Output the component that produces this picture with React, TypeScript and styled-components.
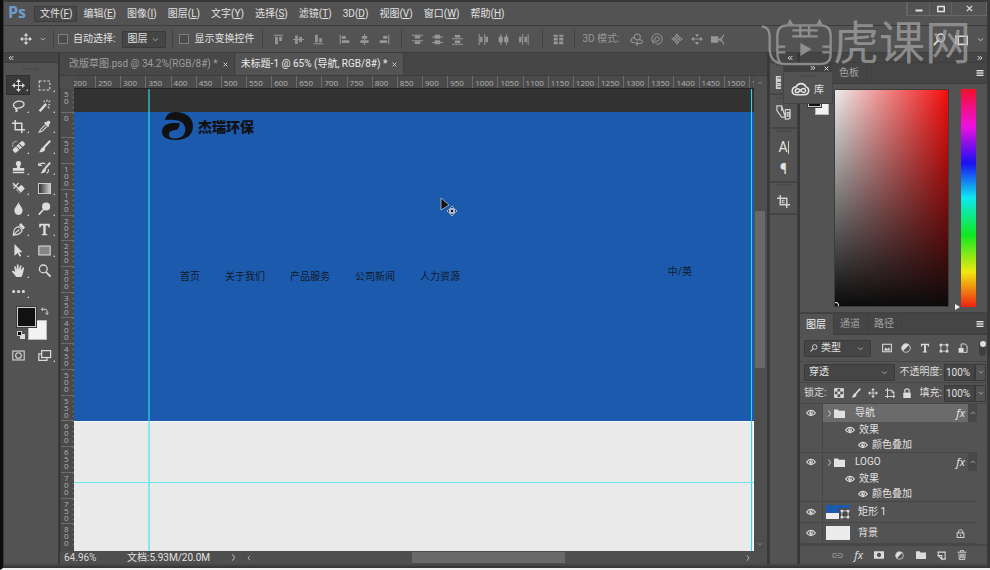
import React from "react";
import styled, { createGlobalStyle, css } from "styled-components";

const c = {
  panel: "#535353",
  dark: "#454545",
  line: "#3d3d3d",
  field: "#454545",
  text: "#e2e2e2",
  dim: "#a2a2a2",
  icon: "#dcdcdc",
  blue: "#1c5aad",
};

const Global = createGlobalStyle`
  * { box-sizing: border-box; }
  body { margin: 0; background: #0c0c0c; }
  body, button, input, select {
    font-family: Roboto, "Noto Sans CJK SC", sans-serif;
    font-size: 10px;
    line-height: 14px;
    color: ${c.text};
  }
  button { background: none; border: 0; padding: 0; display: flex; align-items: center; justify-content: center; }
  ul { list-style: none; margin: 0; padding: 0; }
`;

/* ---------- icons ---------- */

const f = { fill: "currentColor", stroke: "none" };
const icons: Record<string, React.ReactNode> = {
  move: (
    <>
      <path d="M8 2v12M2 8h12" />
      <path {...f} d="M8 0l3 3.6H5zM8 16l3-3.6H5zM0 8l3.6-3v6zM16 8l-3.6-3v6z" />
    </>
  ),
  marquee: <rect x="1.500" y="2.500" width="13" height="11" strokeDasharray="3 2" />,
  lasso: <path d="M5 11C1 10 .6 6 4 4s9-1.700 10.500 1-2 6.500-7.500 6.200c-3 0-3.500 2.300-1.300 2 1.500 0 1 2.300-1.700 2.300" strokeWidth="1.600" />,
  wand: (
    <>
      <path d="M2 15L10 6" strokeWidth="3" />
      <path d="M11 .5v3M7 2l1.500 1.500M15 2l-2 2M12.500 7l2.500 0M12 9.500l2 2" />
    </>
  ),
  crop: <path d="M4 0v12h12M0 4h12v12" strokeWidth="1.800" />,
  cropDetail: (
    <>
      <path d="M4 0v12h12M0 4h12v12" strokeWidth="1.800" />
      <path d="M9.500 6.500h-3v3h3" />
    </>
  ),
  dropper: (
    <>
      <path {...f} d="M10 3l1.500-1.500c2-2 5 1 3 3L13 6l1 1-1.500 1.500-5-5L9 2z" />
      <path d="M9.500 5.500L3 12l-1.500 3L5 14l6.500-6.500" />
    </>
  ),
  heal: (
    <>
      <rect {...f} x="0" y="5.500" width="17" height="6" rx="2" transform="rotate(-42 8.500 8.500)" />
      <path d="M1 8C0 4 3 1 6 2" strokeDasharray="1.500 1" />
      <path stroke="#535353" d="M5.500 8l4 4M9 5l4 4M8.500 8.500h.5" />
    </>
  ),
  brush: (
    <>
      <path d="M15 1L7 9.500" strokeWidth="2.600" />
      <path {...f} d="M6.500 8.500l2.500 2.300C8.500 15 4 15.500 1 15c2.500-1.500 2-5.500 5.500-6.500z" />
    </>
  ),
  stamp: <path {...f} d="M8 0c3 0 4 3 2.700 5-1 1.500-1 2 -.7 3.500h5V12H1V8.500h5c.3-1.500.3-2-.7-3.500C4 3 5 0 8 0zM1 13.300h14V15H1z" />,
  history: (
    <>
      <path d="M15 2L8.500 9.500" strokeWidth="2.400" />
      <path {...f} d="M8 8.500l2 2C9.500 14.500 6 15.500 3 15c2.500-1.500 2-5 5-6.500z" />
      <path d="M1 2v3.500h4M1.500 5C4 2 7 2 9 4M12.500 10c1 2 0 4-2 5" />
    </>
  ),
  eraser: (
    <>
      <rect {...f} x="6" y="6" width="9" height="6.500" rx="1" transform="rotate(-45 10 9)" />
      <path d="M1 1l7 7M8 1L2 8M1 4h4" strokeWidth="1.500" />
      <path stroke="#535353" d="M6.500 9.500l4 4" />
    </>
  ),
  drop: <path {...f} d="M8 0c1 4 5 6.500 5 10.500C13 13.500 11 16 8 16s-5-2.500-5-5.500C3 6.500 7 4 8 0z" />,
  dodge: (
    <>
      <circle {...f} cx="10" cy="5.500" r="5" />
      <path d="M7 9l-6 6.500" strokeWidth="2" />
    </>
  ),
  pen: (
    <>
      <path d="M1.500 15C2 9 3 5 8.500 4.500l4 4C12 13 8 14.500 1.500 15zL7 9.500" strokeWidth="1.400" />
      <path {...f} d="M8.500 2.500L11 0l5 5.500-2.500 2.500zM7 8h2v2H7z" />
    </>
  ),
  type: <path {...f} d="M1.500 1h13v4.500H13C12.500 3.300 12 3 9.500 3v9.500c0 1 .5 1.200 2 1.400V15h-7v-1.100c1.500-.2 2-.4 2-1.400V3C4 3 3.500 3.300 3 5.500H1.500z" />,
  arrow: <path {...f} d="M3 0l10 10H9l2.300 4.600-2 1L7 11l-4 3.500z" />,
  rectangle: <rect x="1" y="2.500" width="14" height="11" fill="#858585" />,
  hand: <path {...f} d="M5 16C3.500 13 1.500 11.500 0 9.500 0 8 2 8 3.800 10L2.800 3.500C2.700 2 4.200 2 4.600 3.300L5.800 7 6 1.500C6 0 7.800 0 8 1.500L8.300 7l1.500-4.800c.5-1.300 2-.9 1.800.5L11 7.800l2.200-3.200c.8-1 2.100-.2 1.600 1C14 8.500 13.500 13 11.500 16z" />,
  zoom: (
    <>
      <circle cx="6.500" cy="6" r="4.800" strokeWidth="1.600" />
      <path d="M10 10l5.500 5.500" strokeWidth="2.300" />
    </>
  ),
  dots: (
    <>
      <circle {...f} cx="2" cy="8" r="1.900" />
      <circle {...f} cx="8" cy="8" r="1.900" />
      <circle {...f} cx="14" cy="8" r="1.900" />
    </>
  ),
  mask: (
    <>
      <rect x="1" y="2.500" width="14" height="11" />
      <circle cx="8" cy="8" r="3.500" />
    </>
  ),
  screen: (
    <>
      <path d="M4.500 6H1v8h10v-3" strokeWidth="1.500" />
      <rect x="4.500" y="2" width="11" height="8.500" strokeWidth="1.500" />
    </>
  ),
  chevron: <path d="M2.500 5.500L8 11l5.500-5.500" strokeWidth="1.900" />,
  up: <path d="M2.500 10.500L8 5l5.500 5.500" strokeWidth="1.900" />,
  right: <path d="M5.500 1l5 7-5 7" strokeWidth="1.900" />,
  left: <path d="M10.500 2.500L5 8l5.500 5.500" strokeWidth="1.900" />,
  dleft: <path d="M8 3L3 8l5 5M14 3L9 8l5 5" strokeWidth="2.600" />,
  dright: <path d="M2 3l5 5-5 5M8 3l5 5-5 5" strokeWidth="2.600" />,
  close: <path d="M2 2l12 12M14 2L2 14" strokeWidth="3" />,
  min: <path d="M1 11h14" strokeWidth="4" />,
  max: <rect x="1.500" y="3" width="13" height="10" strokeWidth="3" />,
  menu: <path d="M1 3h14M1 6.300h14M1 9.600h14M1 13h14" strokeWidth="2" />,
  alTop: <path {...f} d="M1 1h14v1.500H1zM3 4h4v11H3zM9 4h4v6H9z" />,
  alMid: <path {...f} d="M0 7.300h16v1.500H0zM3 2h4v12H3zM9 4.500h4v7H9z" />,
  alBot: <path {...f} d="M1 13.500h14V15H1zM3 1h4v11H3zM9 6h4v6H9z" />,
  alLeft: <path {...f} d="M1 1h1.500v14H1zM4 3h6v4H4zM4 9h11v4H4z" />,
  alCen: <path {...f} d="M7.300 0h1.500v16H7.300zM4 3h8v4H4zM2 9h12v4H2z" />,
  alRight: <path {...f} d="M13.500 1H15v14h-1.500zM6 3h6v4H6zM1 9h11v4H1z" />,
  diTop: <path {...f} d="M0 1h16v1.500H0zM4 3h8v3.500H4zM0 9h16v1.500H0zM4 11h8v3.500H4z" />,
  diMid: <path {...f} d="M0 3.500h16V5H0zM4 1h8v6H4zM0 11.500h16V13H0zM4 9h8v6H4z" />,
  diBot: <path {...f} d="M0 6h16v1.500H0zM4 1.500h8V5H4zM0 14h16v1.500H0zM4 9.500h8V13H4z" />,
  diLeft: <path {...f} d="M1 0h1.500v16H1zM3 4h3.500v8H3zM9 0h1.500v16H9zM11 4h3.500v8H11z" />,
  diCen: <path {...f} d="M3.500 0H5v16H3.500zM1 4h6v8H1zM11.500 0H13v16h-1.500zM9 4h6v8H9z" />,
  diRight: <path {...f} d="M6 0h1.500v16H6zM1.500 4H5v8H1.500zM14 0h1.500v16H14zM9.500 4H13v8H9.500z" />,
  auto: <path {...f} d="M1 1h6v3H1zM9 1h6v3H9zM1 5.500h6v4H1zM9 5.500h6v4H9zM1 11h6v4H1zM9 11h6v4H9z" />,
  orbit: (
    <>
      <circle cx="9" cy="5" r="3.700" />
      <path d="M6 5.500C1 5.500-.5 10 3.500 12l3-.5M11 8.500c4-1 6 3 2 4.500H7.500l2-2.500M7.500 13l2 2.500" />
    </>
  ),
  roll: (
    <>
      <circle cx="8" cy="8" r="3" />
      <path d="M3 13A7 7 0 1 1 7 15M3 13V9M3 13h4" />
    </>
  ),
  pan3: (
    <>
      <path d="M8 1l2.500 3.500h-5zM8 15l2.500-3.500h-5zM1 8l3.500-2.500v5zM15 8l-3.500-2.500v5z" />
      <circle cx="8" cy="8" r="1.800" />
    </>
  ),
  slide3: (
    <>
      <path {...f} d="M8 5.500l2.500-4h-5zM8 16l3-4H5zM0 8l4-3v6zM16 8l-4-3v6z" />
      <path d="M4 8h8" />
    </>
  ),
  cam: (
    <>
      <path {...f} d="M0 4h9v8H0zM9 8l3-3v6z" />
      <path d="M16 2l-3.500 6 3.500 6" />
    </>
  ),
  search: (
    <>
      <circle cx="9.500" cy="6" r="4.700" strokeWidth="1.700" />
      <path d="M6 9.500L1 15" strokeWidth="2.200" />
    </>
  ),
  workspace: <path d="M1 14V4h14v10H4V4" strokeWidth="2" />,
  eye: (
    <>
      <path d="M1 8c3.500-5.500 10.500-5.500 14 0-3.500 5.500-10.500 5.500-14 0z" strokeWidth="1.800" />
      <circle {...f} cx="8" cy="8" r="3" />
      <circle fill="#535353" stroke="none" cx="8.500" cy="7.500" r="1" />
    </>
  ),
  folder: <path {...f} d="M0 2h6l1 2h9v10.500H0z" />,
  image: (
    <>
      <rect x="1" y="2" width="14" height="12" strokeWidth="1.700" />
      <path {...f} d="M3 12l3-5 2.500 3L11 7l2.500 5z" />
    </>
  ),
  adjust: (
    <>
      <circle cx="8" cy="8" r="6.800" />
      <path {...f} d="M12.800 3.200a6.800 6.800 0 0 0-9.600 9.600z" />
    </>
  ),
  shape: (
    <>
      <rect x="3" y="3" width="10" height="10" />
      <path {...f} d="M1 1h4v4H1zM11 1h4v4h-4zM1 11h4v4H1zM11 11h4v4h-4z" />
    </>
  ),
  smart: (
    <>
      <path d="M5 8V1.500h6l3.500 3V15H9" strokeWidth="1.500" />
      <path {...f} d="M1 8h8v7.500H1z" />
    </>
  ),
  checker: (
    <>
      <rect x="1" y="1" width="14" height="14" />
      <path {...f} d="M1 1h4.500v4.500H1zM10 1h5v4.500h-5zM5.500 5.500H10V10H5.500zM1 10h4.500v5H1zM10 10h5v5h-5z" />
    </>
  ),
  artboard: <path d="M4 0v16M0 3.500h11l3 3V16M0 13.500h16M11 3v4h4" strokeWidth="1.500" />,
  lockFill: (
    <>
      <rect {...f} x="2" y="7" width="12" height="9" rx="1" />
      <path d="M4.500 7V4c0-3.500 7-3.500 7 0v3" strokeWidth="1.900" />
    </>
  ),
  lock: (
    <>
      <rect x="2" y="7" width="12" height="8" strokeWidth="1.600" />
      <path d="M4.500 7V4c0-3.500 7-3.500 7 0v3M8 10v3" strokeWidth="1.600" />
    </>
  ),
  link: <path d="M7 5H4a3 3 0 0 0 0 6h3M9 5h3a3 3 0 0 1 0 6H9M5 8h6" strokeWidth="1.500" />,
  maskAdd: <path {...f} fillRule="evenodd" d="M0 2h16v12H0zM8 4.500a3.500 3.500 0 1 0 .01 0z" />,
  newLayer: <path d="M2 8V2h12.500v12.500H9M2 8h6.500v6.500zM8.500 8L2 8" strokeWidth="1.900" />,
  trash: <path d="M1 3.500h14M5.500 3V1h5v2M3 5.500l.6 9.500h8.800l.6-9.500M6 6v7M8 6v7M10 6v7" strokeWidth="1.500" />,
  swap: <path d="M4 1L1 4.500 4 8M1 4.500h7c3 0 4 1 4 4V14M9 11.500l3 3.500 3-3.500" strokeWidth="1.800" />,
  cc: (
    <>
      <path d="M4 13C-1.500 12.500-.5 5.500 4 5.500 5.500 1.500 11.500 1.500 13 5.500c4 1.500 3.500 7.500-1.500 7.500z" strokeWidth="1.500" />
      <path d="M11 10.800c-2 0-2.500-1.300-4-2.800S3 7.700 3 9.300s2 2.300 3.600.7S9 7 11 7s2.600 3.800 0 3.800z" strokeWidth="1.400" />
    </>
  ),
  libs: <path d="M1 1h5l4 12H6L1 6zM6 1v5M10 5h5v9l-2 1h-3zM12 8h2v4h-2z" />,
  histPanel: <path d="M8 2H3v3h5M8 7H3v3h5M8 12H3v3h5" strokeWidth="1.800" />,
};

const Svg = styled.svg<{ $s: number }>`
  width: ${(p) => p.$s}px;
  height: ${(p) => p.$s}px;
  flex: none;
  display: block;
  overflow: visible;
`;
const Icon = ({ n, s = 12 }: { n: string; s?: number }) => (
  <Svg $s={s} viewBox="0 0 16 16" fill="none" stroke="currentColor" strokeWidth="1.300" aria-hidden="true">
    {icons[n]}
  </Svg>
);

/* ---------- frame ---------- */

const Shell = styled.div`
  height: 100vh;
  display: flex;
  flex-direction: column;
  padding: 2px 3px 0 1px;
  background: #383838;
  border-left: 3px solid #0c0c0c;
  border-bottom: 2px solid #f2f2f2;
  position: relative;
  overflow: hidden;
`;
const MenuBar = styled.header`
  height: 24px;
  flex: none;
  display: flex;
  background: ${c.panel};
  border-bottom: 1px solid ${c.line};
`;
const Logo = styled.div`
  color: #6f9ccc;
  font: bold 16px/20px "Open Sans", sans-serif;
  width: 30px;
  padding-left: 4px;
`;
const Menu = styled.nav`
  display: flex;
  flex: 1;
  align-items: center;
`;
const MenuItem = styled.button<{ $on?: boolean }>`
  height: 16px;
  padding: 0 4px 0 5px;
  white-space: nowrap;
  border: 1px solid transparent;
  ${(p) => p.$on && css`background: #484848; border-color: #3c3c3c;`}
`;
const WindowButtons = styled.div`
  display: flex;
  height: 14px;
  border: 1px solid #676767;
  border-top: 0;
`;
const WindowButton = styled.button<{ $wide?: boolean }>`
  width: ${(p) => (p.$wide ? 35 : 22)}px;
  border-left: 1px solid #626262;
`;
const Options = styled.div`
  height: 27px;
  flex: none;
  display: flex;
  align-items: center;
  background: ${c.panel};
  border-bottom: 1px solid ${c.line};
  padding: 0 3px 0 9px;
  white-space: nowrap;
`;
const Sep = styled.i`
  width: 1px;
  height: 18px;
  background: #424242;
`;
const OptGroup = styled.div<{ $gap?: number; $pad?: number; $dim?: boolean }>`
  display: flex;
  align-items: center;
  gap: ${(p) => p.$gap ?? 8}px;
  padding: 0 ${(p) => p.$pad ?? 8}px;
  color: ${(p) => (p.$dim ? "#969696" : c.icon)};
`;
const ModeLabel = styled.span`
  padding: 0 2px;
`;
const Check = styled.label`
  display: flex;
  align-items: center;
  gap: 5px;
  color: ${c.text};
  input {
    appearance: none;
    width: 10px;
    height: 10px;
    margin: 0;
    border: 1px solid #7e7e7e;
    background: #4a4a4a;
  }
`;
const Spring = styled.div`
  flex: 1;
`;

const SelectWrap = styled.div<{ $w: number }>`
  display: grid;
  grid-template-columns: 1fr 14px;
  align-items: center;
  width: ${(p) => p.$w}px;
  height: 17px;
  color: #bdbdbd;
  > svg { grid-area: 1 / 2; pointer-events: none; }
`;
const Select = styled.select<{ $pad?: number }>`
  grid-area: 1 / 1 / 2 / 3;
  appearance: none;
  width: 100%;
  height: 100%;
  border: 1px solid #3a3a3a;
  border-radius: 1px;
  background: ${c.field};
  padding: 0 0 0 ${(p) => p.$pad ?? 4}px;
`;
const Dropdown = ({ label, value, w, pad }: { label: string; value: string; w: number; pad?: number }) => (
  <SelectWrap $w={w}>
    <Select aria-label={label} $pad={pad}>
      <option>{value}</option>
    </Select>
    <Icon n="chevron" s={7} />
  </SelectWrap>
);

const Main = styled.div`
  flex: 1;
  min-height: 0;
  display: flex;
  gap: 2px;
  border-bottom: 2px solid #464646;
  margin-bottom: 2px;
`;

/* ---------- toolbox ---------- */

const ToolBox = styled.aside`
  width: 54px;
  flex: none;
  background: ${c.panel};
  display: flex;
  flex-direction: column;
`;
const DockHead = styled.div<{ $end?: boolean }>`
  height: 10px;
  flex: none;
  display: flex;
  align-items: center;
  justify-content: ${(p) => (p.$end ? "flex-end" : "flex-start")};
  padding: 0 4px;
  background: ${c.dark};
  border-bottom: 1px solid ${c.line};
`;
const Grip = styled.i<{ $h: number }>`
  height: ${(p) => p.$h}px;
  flex: none;
  align-self: center;
  width: 16px;
  background: repeating-linear-gradient(90deg, #444 0 1px, transparent 1px 2px) center / 16px 2px no-repeat;
`;
const ToolGrid = styled.div`
  display: grid;
  grid-template-columns: 26px 26px;
  grid-template-rows: repeat(11, 1fr);
  height: 227px;
  padding-left: 1px;
`;
const Tool = styled.button<{ $on?: boolean; $plain?: boolean }>`
  position: relative;
  height: 20px;
  margin: 0 1px;
  color: ${c.icon};
  ${(p) => p.$on && css`background: #3a3a3a; border: 1px solid #303030;`}
  ${(p) =>
    !p.$plain &&
    css`
      &::after {
        content: "";
        position: absolute;
        right: 1px;
        bottom: 3px;
        border: 1px solid #c8c8c8;
        border-top-color: transparent;
        border-left-color: transparent;
      }
    `}
`;
const Colors = styled.div`
  display: grid;
  grid-template-columns: 11px 9px 10px;
  grid-template-rows: 13px 7px 13px;
  margin: 5px 0 0 13px;
  color: ${c.icon};
`;
const Fore = styled.button`
  grid-area: 1 / 1 / 3 / 3;
  margin-right: 1px;
  background: #111;
  border: 1px solid #ccc;
  outline: 1px solid #3a3a3a;
  z-index: 1;
`;
const Back = styled.button`
  grid-area: 2 / 2 / 4 / 4;
  background: #f2f2f2;
  border: 1px solid #bbb;
`;
const SwapBtn = styled.button`
  grid-area: 1 / 3;
  align-self: start;
  margin-left: 5px;
`;
const DefaultBtn = styled.button`
  grid-area: 3 / 1;
  align-self: center;
  justify-self: start;
  width: 5px;
  height: 5px;
  background: #000;
  border: 1px solid #ccc;
  box-shadow: 3px 3px 0 #ddd;
`;
const ModeRow = styled.div`
  display: grid;
  grid-template-columns: 26px 26px;
  padding: 5px 0 0 1px;
`;

/* ---------- document ---------- */

const Doc = styled.main`
  flex: 1;
  min-width: 0;
  display: flex;
  flex-direction: column;
  background: ${c.dark};
`;
const Tabs = styled.div`
  display: flex;
  height: 23px;
  flex: none;
  background: #464646;
  border-bottom: 1px solid ${c.line};
`;
const DocTab = styled.div<{ $on?: boolean }>`
  display: flex;
  align-items: center;
  gap: 5px;
  padding: 0 6px 0 ${(p) => (p.$on ? 6 : 9)}px;
  white-space: nowrap;
  border-right: 1px solid ${c.line};
  color: ${(p) => (p.$on ? "#ececec" : "#9e9e9e")};
  background: ${(p) => (p.$on ? c.panel : "#484848")};
  > button:first-child { color: inherit; }
  > button:last-child { color: #cfcfcf; }
`;
const Board = styled.div`
  flex: 1;
  min-height: 0;
  display: grid;
  grid-template-columns: 14px 1fr 13px;
  grid-template-rows: 13px 1fr 13px;
  background: #4e4e4e;
`;
const RulerX = styled.div`
  grid-area: 1 / 2;
  overflow: hidden;
  border-bottom: 1px solid #222;
  background: #4a4a4a;
`;
const TicksX = styled.div`
  display: grid;
  grid-template-columns: repeat(28, 1fr);
  height: 100%;
  margin: 0 -20px 0 -4px;
`;
const TickX = styled.span`
  border-left: 1px solid #6c6c6c;
  padding-left: 2px;
  font: 8px/14px "Open Sans", sans-serif;
  color: #b2b2b2;
  background: repeating-linear-gradient(90deg, #666 0 1px, transparent 1px 5px) 0 100% / 100% 2px no-repeat;
`;
const RulerY = styled.div`
  grid-area: 2 / 1;
  overflow: hidden;
  background: #4a4a4a;
  border-left: 1px solid #3f3f3f;
`;
const TicksY = styled.div`
  display: grid;
  grid-template-rows: repeat(18, 1fr);
  height: calc(100% + 1px);
  margin-top: -3px;
`;
const TickY = styled.span`
  border-top: 1px solid #6c6c6c;
  padding: 1px 5px 0 3px;
  font: 8px/7px "Open Sans", sans-serif;
  color: #b2b2b2;
  width: 13px;
  word-break: break-all;
  background: repeating-linear-gradient(#666 0 1px, transparent 1px 5px) 100% 0 / 2px 100% no-repeat;
  &:first-child { padding-top: 3px; }
`;
const Canvas = styled.div`
  grid-area: 2 / 2;
  position: relative;
  overflow: hidden;
  display: flex;
  flex-direction: column;
  background: #323232;
  padding-top: 23px;
  color: #101a2c;
`;
const Page = styled.div`
  flex: 1;
  background: #eaeaea;
  border-right: 1px solid #fff;
`;
const Hero = styled.section`
  background: ${c.blue};
  height: 310px;
  display: flex;
  flex-direction: column;
  border-bottom: 1px solid #fff;
`;
const Brand = styled.div`
  display: flex;
  align-items: center;
  gap: 5px;
  padding-left: 88px;
  height: 28px;
  font: 900 14px/20px "Noto Sans CJK SC", sans-serif;
  color: #111;
`;
const SiteNav = styled.nav`
  display: flex;
  justify-content: space-between;
  align-items: flex-start;
  margin-top: 125px;
  padding: 0 62px 0 106px;
  ul { display: flex; gap: 25px; padding-top: 5px; }
  a { color: inherit; text-decoration: none; white-space: nowrap; }
`;
const GuideV = styled.i<{ $right?: boolean }>`
  position: absolute;
  top: 0;
  bottom: 0;
  ${(p) => (p.$right ? "right: 2px;" : "left: 74px;")}
  width: ${(p) => (p.$right ? 1 : 2)}px;
  background: ${(p) => (p.$right ? "#22dbe6" : "rgba(50, 230, 235, 0.55)")};
`;
const GuideH = styled.i`
  position: absolute;
  left: 0;
  right: 0;
  top: 393px;
  height: 1px;
  background: #66e6e6;
`;
const Cursor = styled.svg`
  position: absolute;
  left: 366px;
  top: 108px;
  width: 18px;
  height: 20px;
`;
const ScrollY = styled.div`
  grid-area: 1 / 3 / 3 / 4;
  display: flex;
  flex-direction: column;
  align-items: center;
  padding: 4px 2px 4px 0;
  color: #969696;
`;
const ThumbY = styled.div`
  width: 10px;
  height: 157px;
  margin-top: 125px;
  background: #696969;
`;
const Status = styled.footer`
  grid-area: 3 / 1 / 4 / 4;
  display: flex;
  align-items: center;
  padding: 0 16px 0 4px;
  color: #d8d8d8;
  white-space: nowrap;
`;
const ZoomLevel = styled.span`
  width: 63px;
`;
const DocSize = styled.button`
  width: 110px;
  margin-right: 9px;
  justify-content: space-between;
`;
const TrackX = styled.div`
  flex: 1;
  height: 11px;
  display: flex;
  justify-content: center;
  padding-right: 20px;
`;
const ThumbX = styled.div`
  width: 153px;
  background: #696969;
`;

/* ---------- right docks ---------- */

const Strip = styled.aside`
  width: 29px;
  flex: none;
  display: flex;
  flex-direction: column;
  background: ${c.panel};
  border-left: 1px solid ${c.line};
  border-right: 1px solid ${c.line};
  position: relative;
`;
const StripGroup = styled.div<{ $h: number; $gap?: number }>`
  height: ${(p) => p.$h}px;
  display: flex;
  flex-direction: column;
  align-items: center;
  gap: ${(p) => p.$gap ?? 9}px;
  border-bottom: 2px solid #454545;
  color: #d0d0d0;
`;
const Character = styled.button<{ $caret?: boolean }>`
  font-size: 14px;
  line-height: 13px;
  ${(p) => p.$caret && "border-right: 1px solid #ccc;"}
`;
const Library = styled.div`
  position: absolute;
  left: 13px;
  top: 10px;
  width: 50px;
  z-index: 2;
  background: ${c.panel};
  border: 1px solid #444;
  display: flex;
  flex-direction: column;
`;
const LibraryHead = styled.div`
  height: 8px;
  display: flex;
  justify-content: flex-end;
  align-items: center;
  gap: 8px;
  padding-right: 3px;
  background: #404040;
`;
const LibraryBtn = styled.button`
  height: 24px;
  gap: 5px;
  padding-bottom: 3px;
`;
const Dock = styled.aside`
  width: 187px;
  flex: none;
  display: flex;
  flex-direction: column;
  background: ${c.panel};
`;
const PanelTabs = styled.div<{ $pad?: number }>`
  display: flex;
  flex: none;
  height: 21px;
  align-items: stretch;
  padding: 0 3px 0 ${(p) => p.$pad ?? 0}px;
  background: ${c.dark};
  border-bottom: 1px solid ${c.line};
  color: #b4b4b4;
`;
const PanelTab = styled.button<{ $on?: boolean }>`
  padding: 0 7px 0 6px;
  border-right: 1px solid #404040;
  color: ${(p) => (p.$on ? "#f2f2f2" : c.dim)};
  background: ${(p) => (p.$on ? c.panel : "transparent")};
  margin-bottom: ${(p) => (p.$on ? -1 : 0)}px;
`;
const ColorPanel = styled.div`
  display: flex;
  padding: 5px 11px 5px 8px;
  border-bottom: 2px solid #424242;
  height: 230px;
  flex: none;
`;
const MiniColors = styled.div`
  display: grid;
  grid-template-columns: 7px 7px 7px;
  grid-template-rows: 8px 5px 8px;
  margin-top: 5px;
  width: 26px;
`;
const Field = styled.div`
  flex: 1;
  border: 1px solid #3c3c3c;
  background: linear-gradient(to top, #0b0b0b, transparent), linear-gradient(to right, #ececec, #f40d0d);
  display: flex;
  align-items: flex-end;
  overflow: hidden;
`;
const Picker = styled.i`
  width: 6px;
  height: 6px;
  margin: 0 0 -2px -2px;
  border: 1px solid #fff;
  border-radius: 50%;
`;
const HueWrap = styled.div`
  display: flex;
  align-items: flex-end;
  margin-left: 6px;
`;
const HuePointer = styled.i`
  border: 3px solid transparent;
  border-left: 5px solid #eee;
  border-right: 0;
  margin: 0 1px -3px 0;
`;
const Hue = styled.div`
  width: 15px;
  height: 100%;
  background: linear-gradient(#f0102a, #f010e0 17%, #1a10f0 34%, #10e8f0 50%, #10e820 67%, #f0e810 84%, #f02010);
`;
const Row = styled.div<{ $h?: number }>`
  display: flex;
  align-items: center;
  justify-content: space-between;
  flex: none;
  height: ${(p) => p.$h ?? 21}px;
  padding: 0 1px 0 4px;
  border-bottom: 1px solid #474747;
  color: ${c.icon};
  white-space: nowrap;
`;
const Cluster = styled.div<{ $gap: number }>`
  display: flex;
  align-items: center;
  gap: ${(p) => p.$gap}px;
`;
const FilterSelect = styled.div`
  display: grid;
  align-items: center;
  width: 67px;
  > svg { grid-area: 1 / 1; margin-left: 6px; z-index: 1; }
  > div { grid-area: 1 / 1; }
`;
const Toggle = styled.button`
  width: 7px;
  height: 15px;
  border-radius: 4px;
  background: #3f3f3f;
  align-items: flex-start;
  &::before { content: ""; width: 6px; height: 6px; border-radius: 50%; background: #ddd; }
`;
const Percent = styled.label`
  display: flex;
  align-items: center;
  gap: 2px;
  input {
    width: 31px;
    height: 17px;
    padding: 0 1px;
    background: ${c.field};
    border: 1px solid #3a3a3a;
  }
`;
const Drop = styled.button`
  width: 11px;
  height: 17px;
  border: 1px solid #3a3a3a;
  color: #bdbdbd;
`;
const LayerList = styled.ul`
  flex: 1;
`;
const Layer = styled.li`
  display: grid;
  grid-template-columns: 23px 1fr;
  margin-right: 10px;
  border-bottom: 1px solid #474747;
`;
const EyeCell = styled.div<{ $h: number }>`
  display: flex;
  justify-content: center;
  padding-top: ${(p) => p.$h / 2 - 5}px;
  border-right: 1px solid #474747;
  color: ${c.icon};
`;
const LayerRow = styled.div<{ $on?: boolean; $h: number }>`
  display: flex;
  align-items: center;
  height: ${(p) => p.$h}px;
  padding: 0 0 0 3px;
  background: ${(p) => (p.$on ? "#6b6b6b" : "transparent")};
  color: ${c.text};
`;
const Name = styled.span<{ $l: number }>`
  flex: 1;
  padding-left: ${(p) => p.$l}px;
`;
const Fx = styled.span`
  font: italic 11px/14px "Noto Sans", sans-serif;
`;
const FxCell = styled.div`
  display: flex;
  align-items: center;
  align-self: stretch;
  gap: 3px;
  > button { width: 9px; height: 100%; background: #484848; color: #bbb; }
`;
const Effect = styled.div<{ $l: number }>`
  display: flex;
  align-items: center;
  gap: 4px;
  height: 15px;
  padding-left: ${(p) => p.$l}px;
`;
const Thumb = styled.div<{ $shape?: boolean }>`
  width: 24px;
  height: 14px;
  display: flex;
  justify-content: flex-end;
  align-items: flex-end;
  color: #ddd;
  background: ${(p) => (p.$shape ? `linear-gradient(${c.blue} 60%, #eee 60%)` : "#ececec")};
`;
const ShapeBadge = styled.i`
  display: flex;
  padding: 1px 0 0 1px;
  background: #484848;
`;
const LayerFoot = styled.div`
  height: 20px;
  flex: none;
  display: flex;
  align-items: center;
  justify-content: space-between;
  padding: 0 20px 0 32px;
  border-top: 2px solid #474747;
  color: ${c.icon};
  > svg:first-child { color: #8e8e8e; }
`;

/* ---------- overlay ---------- */

const Watermark = styled.div`
  position: absolute;
  right: 19px;
  top: 11px;
  height: 56px;
  display: flex;
  align-items: center;
  pointer-events: none;
  color: #a8a8a8;
  opacity: 0.7;
  font: 400 46px/56px "Noto Sans CJK SC", sans-serif;
  z-index: 5;
  svg { width: 72px; height: 50px; margin-top: 8px; }
`;

/* ---------- data ---------- */

const menus: [string, string][] = [
  ["文件", "F"], ["编辑", "E"], ["图像", "I"], ["图层", "L"], ["文字", "Y"], ["选择", "S"],
  ["滤镜", "T"], ["3D", "D"], ["视图", "V"], ["窗口", "W"], ["帮助", "H"],
];
const tools = [
  "move", "marquee", "lasso", "wand", "crop", "dropper", "heal", "brush", "stamp", "history", "eraser",
  "gradient", "drop", "dodge", "pen", "type", "arrow", "rectangle", "hand", "zoom", "dots",
];
const Gradient = styled.i`
  width: 13px;
  height: 11px;
  border: 1px solid #ccc;
  background: linear-gradient(90deg, #333, #ccc);
`;
const ticksX = Array.from({ length: 28 }, (_, i) => 200 + i * 50);
const ticksY = Array.from({ length: 18 }, (_, i) => Math.abs(i * 50 - 50));

const GroupLayer = ({ name, on }: { name: string; on?: boolean }) => (
  <Layer>
    <EyeCell $h={18}><Icon n="eye" s={10} /></EyeCell>
    <div>
      <LayerRow $on={on} $h={18}>
        <Icon n="right" s={7} />
        <Cluster $gap={0}><Name $l={1} /><Icon n="folder" s={11} /></Cluster>
        <Name $l={10}>{name}</Name>
        <FxCell>
          <Fx>fx</Fx>
          <button aria-label="折叠效果"><Icon n="up" s={6} /></button>
        </FxCell>
      </LayerRow>
      <Effect $l={22}><Icon n="eye" s={10} />效果</Effect>
      <Effect $l={35}><Icon n="eye" s={10} />颜色叠加</Effect>
    </div>
  </Layer>
);

export default function App() {
  return (
    <Shell>
      <Global />
      <MenuBar>
        <Logo>Ps</Logo>
        <Menu>
          {menus.map(([t, k], i) => (
            <MenuItem key={t} $on={i === 0}>{t}(<u>{k}</u>)</MenuItem>
          ))}
        </Menu>
        <WindowButtons>
          <WindowButton aria-label="最小化"><Icon n="min" s={8} /></WindowButton>
          <WindowButton aria-label="最大化"><Icon n="max" s={8} /></WindowButton>
          <WindowButton $wide aria-label="关闭"><Icon n="close" s={7} /></WindowButton>
        </WindowButtons>
      </MenuBar>

      <Options>
        <OptGroup $gap={8} $pad={7}>
          <Icon n="move" s={12} />
          <Icon n="chevron" s={6} />
        </OptGroup>
        <Sep />
        <OptGroup $gap={7} $pad={4}>
          <Check><input type="checkbox" />自动选择:</Check>
          <Dropdown label="自动选择" value="图层" w={44} />
        </OptGroup>
        <OptGroup $pad={1} />
        <Sep />
        <OptGroup $pad={6}>
          <Check><input type="checkbox" />显示变换控件</Check>
        </OptGroup>
        <OptGroup $pad={1} />
        <Sep />
        <OptGroup $gap={9} $pad={10} $dim>
          <Icon n="alTop" s={11} /><Icon n="alMid" s={11} /><Icon n="alBot" s={11} />
        </OptGroup>
        <OptGroup $gap={9} $pad={5} $dim>
          <Icon n="alLeft" s={11} /><Icon n="alCen" s={11} /><Icon n="alRight" s={11} />
        </OptGroup>
        <OptGroup $pad={3} />
        <Sep />
        <OptGroup $gap={9} $pad={10} $dim>
          <Icon n="diTop" s={11} /><Icon n="diMid" s={11} /><Icon n="diBot" s={11} />
        </OptGroup>
        <OptGroup $gap={9} $pad={5} $dim>
          <Icon n="diLeft" s={11} /><Icon n="diCen" s={11} /><Icon n="diRight" s={11} />
        </OptGroup>
        <OptGroup $pad={4} />
        <Sep />
        <OptGroup $pad={10} $dim><Icon n="auto" s={11} /></OptGroup>
        <Sep />
        <OptGroup $gap={8} $pad={5} $dim>
          <ModeLabel>3D 模式:</ModeLabel>
          <Icon n="orbit" s={13} /><Icon n="roll" s={12} /><Icon n="pan3" s={12} /><Icon n="slide3" s={12} /><Icon n="cam" s={13} />
        </OptGroup>
        <Spring />
        <OptGroup $gap={9} $pad={0}>
          <Icon n="search" s={13} /><Icon n="workspace" s={13} /><Icon n="chevron" s={7} />
        </OptGroup>
      </Options>

      <Main>
        <ToolBox>
          <DockHead><Icon n="dleft" s={6} /></DockHead>
          <Grip $h={12} />
          <ToolGrid>
            {tools.map((t, i) => (
              <Tool key={t} aria-label={t} $on={i === 0} $plain={t === "zoom"}>
                {t === "gradient" ? <Gradient /> : <Icon n={t} s={13} />}
              </Tool>
            ))}
          </ToolGrid>
          <Colors>
            <Fore aria-label="前景色" />
            <Back aria-label="背景色" />
            <SwapBtn aria-label="切换颜色"><Icon n="swap" s={8} /></SwapBtn>
            <DefaultBtn aria-label="默认颜色" />
          </Colors>
          <ModeRow>
            <Tool $plain aria-label="快速蒙版"><Icon n="mask" s={13} /></Tool>
            <Tool aria-label="屏幕模式"><Icon n="screen" s={13} /></Tool>
          </ModeRow>
        </ToolBox>

        <Doc>
          <Tabs>
            <DocTab>
              <button>改版草图.psd @ 34.2%(RGB/8#) *</button>
              <button aria-label="关闭"><Icon n="close" s={5} /></button>
            </DocTab>
            <DocTab $on>
              <button>未标题-1 @ 65% (导航, RGB/8#) *</button>
              <button aria-label="关闭"><Icon n="close" s={5} /></button>
            </DocTab>
          </Tabs>
          <Board>
            <RulerX>
              <TicksX>{ticksX.map((v) => <TickX key={v}>{v}</TickX>)}</TicksX>
            </RulerX>
            <RulerY>
              <TicksY>{ticksY.map((v, i) => <TickY key={i}>{v}</TickY>)}</TicksY>
            </RulerY>
            <Canvas>
              <Hero>
                <Brand>
                  <svg width="31" height="28" viewBox="0 0 31 28" aria-hidden="true">
                    <path fill="#111" d="M3 8C4 3 7 0 13 0c11 0 18 6 18 14 0 9-7 14-17 14C5 28 0 25 0 20c0-6 5-9 11-9h7l-1.500 5C15 18 14 18.500 12 18.500c-3 0-5 1.500-5 4 1.500 3.500 8 4.500 12 2.500 5-2.500 5.500-9 2.500-13C18 7.500 11 7.500 3 8z" />
                    <path fill={c.blue} d="M3 9.500C11 8.500 17 8.500 20.500 12c-4-2-8-2-12-1.200L2 13zM7 24c-.5-4 3-6 8-6 3 0 5.500 1.500 6 4-2 3.500-5 4.500-9 4.500-2.500-.3-4-1-5-2.500z" />
                  </svg>
                  杰瑞环保
                </Brand>
                <SiteNav>
                  <ul>
                    {["首页", "关于我们", "产品服务", "公司新闻", "人力资源"].map((t) => (
                      <li key={t}><a href="#">{t}</a></li>
                    ))}
                  </ul>
                  <a href="#">中/英</a>
                </SiteNav>
              </Hero>
              <Page />
              <GuideV />
              <GuideV $right />
              <GuideH />
              <Cursor viewBox="0 0 18 20" aria-hidden="true">
                <path d="M1 1v12l8-5z" fill="#111" stroke="#c8d4e6" strokeWidth=".7" />
                <path d="M12 9l2 2.500h-4zM12 19l2-2.500h-4zM7 14l2.500-2v4zM17 14l-2.500-2v4zM10.500 12.500h3v3h-3z" fill="#111" stroke="#d8e0ee" strokeWidth=".8" />
              </Cursor>
            </Canvas>
            <ScrollY>
              <Icon n="up" s={6} />
              <ThumbY />
              <Spring />
              <Icon n="chevron" s={6} />
            </ScrollY>
            <Status>
              <ZoomLevel>64.96%</ZoomLevel>
              <DocSize>文档:5.93M/20.0M<Icon n="right" s={7} /></DocSize>
              <Icon n="left" s={6} />
              <TrackX><ThumbX /></TrackX>
              <Icon n="right" s={6} />
            </Status>
          </Board>
        </Doc>

        <Strip>
          <DockHead $end><Icon n="dleft" s={6} /></DockHead>
          <StripGroup $h={32}><Grip $h={3} /><Cluster $gap={0}><Icon n="histPanel" s={14} /><OptGroup $pad={3} /></Cluster></StripGroup>
          <StripGroup $h={34} $gap={5}><Grip $h={5} /><Icon n="libs" s={15} /></StripGroup>
          <StripGroup $h={54}>
            <Grip $h={3} />
            <Character $caret aria-label="字符">A</Character>
            <Character aria-label="段落">¶</Character>
          </StripGroup>
          <StripGroup $h={32}><Grip $h={3} /><Icon n="cropDetail" s={13} /></StripGroup>
          <Library>
            <LibraryHead><Icon n="dright" s={6} /><Icon n="close" s={5} /></LibraryHead>
            <Grip $h={7} />
            <LibraryBtn><Icon n="cc" s={17} />库</LibraryBtn>
          </Library>
        </Strip>

        <Dock>
          <DockHead $end><Icon n="dright" s={6} /></DockHead>
          <PanelTabs $pad={33}>
            <PanelTab>色板</PanelTab>
            <Spring />
            <button aria-label="面板菜单"><Icon n="menu" s={8} /></button>
          </PanelTabs>
          <ColorPanel>
            <MiniColors><Fore aria-label="前景色" /><Back aria-label="背景色" /></MiniColors>
            <Field><Picker /></Field>
            <HueWrap><HuePointer /><Hue /></HueWrap>
          </ColorPanel>
          <PanelTabs>
            <PanelTab $on>图层</PanelTab>
            <PanelTab>通道</PanelTab>
            <PanelTab>路径</PanelTab>
            <Spring />
            <button aria-label="面板菜单"><Icon n="menu" s={8} /></button>
          </PanelTabs>
          <Row $h={27}>
            <FilterSelect>
              <Icon n="search" s={8} />
              <Dropdown label="筛选" value="类型" w={67} pad={16} />
            </FilterSelect>
            <Cluster $gap={9}>
              {["image", "adjust", "type", "shape", "smart"].map((n) => <Icon key={n} n={n} s={10} />)}
            </Cluster>
            <Toggle aria-label="筛选开关" />
          </Row>
          <Row>
            <Dropdown label="混合模式" value="穿透" w={91} />
            <Cluster $gap={0}>
              <Percent><span>不透明度:</span><input defaultValue="100%" /></Percent>
              <Drop aria-label="不透明度滑块"><Icon n="chevron" s={6} /></Drop>
            </Cluster>
          </Row>
          <Row>
            <span>锁定:</span>
            <Cluster $gap={7}>
              {["checker", "brush", "move", "artboard", "lockFill"].map((n) => <Icon key={n} n={n} s={10} />)}
            </Cluster>
            <Cluster $gap={0}>
              <Percent><span>填充:</span><input defaultValue="100%" /></Percent>
              <Drop aria-label="填充滑块"><Icon n="chevron" s={6} /></Drop>
            </Cluster>
          </Row>
          <LayerList>
            <GroupLayer name="导航" on />
            <GroupLayer name="LOGO" />
            <Layer>
              <EyeCell $h={20}><Icon n="eye" s={10} /></EyeCell>
              <LayerRow $h={20}>
                <Thumb $shape><ShapeBadge><Icon n="shape" s={10} /></ShapeBadge></Thumb>
                <Name $l={8}>矩形 1</Name>
              </LayerRow>
            </Layer>
            <Layer>
              <EyeCell $h={20}><Icon n="eye" s={10} /></EyeCell>
              <LayerRow $h={20}>
                <Thumb />
                <Name $l={8}>背景</Name>
                <Icon n="lock" s={9} />
                <OptGroup $pad={6} />
              </LayerRow>
            </Layer>
          </LayerList>
          <LayerFoot>
            <Icon n="link" s={11} />
            <Fx>fx</Fx>
            <Icon n="maskAdd" s={10} />
            <Icon n="adjust" s={9} />
            <Icon n="folder" s={10} />
            <Icon n="newLayer" s={9} />
            <Icon n="trash" s={10} />
          </LayerFoot>
        </Dock>
      </Main>

      <Watermark>
        <svg viewBox="0 0 212 150" fill="none" stroke="currentColor" strokeWidth="7" aria-hidden="true">
          <path d="M0 25c18 2 24 12 24 36v34c2 30 16 41 48 43h104c22 0 31-12 31-30V52c0-20-10-30-31-30H78c-22 0-31 12-31 30v50c0 18 4 28 12 36" />
          <path d="M47 86h24M47 103h24M182 86h24M182 103h24M92 37h76M92 55h76M116 24v31M142 24v31" />
          <path fill="currentColor" stroke="none" d="M76 20l9-18 10 18zM164 20l10-18 9 18zM116 74v40l34-20z" />
        </svg>
        虎课网
      </Watermark>
    </Shell>
  );
}
